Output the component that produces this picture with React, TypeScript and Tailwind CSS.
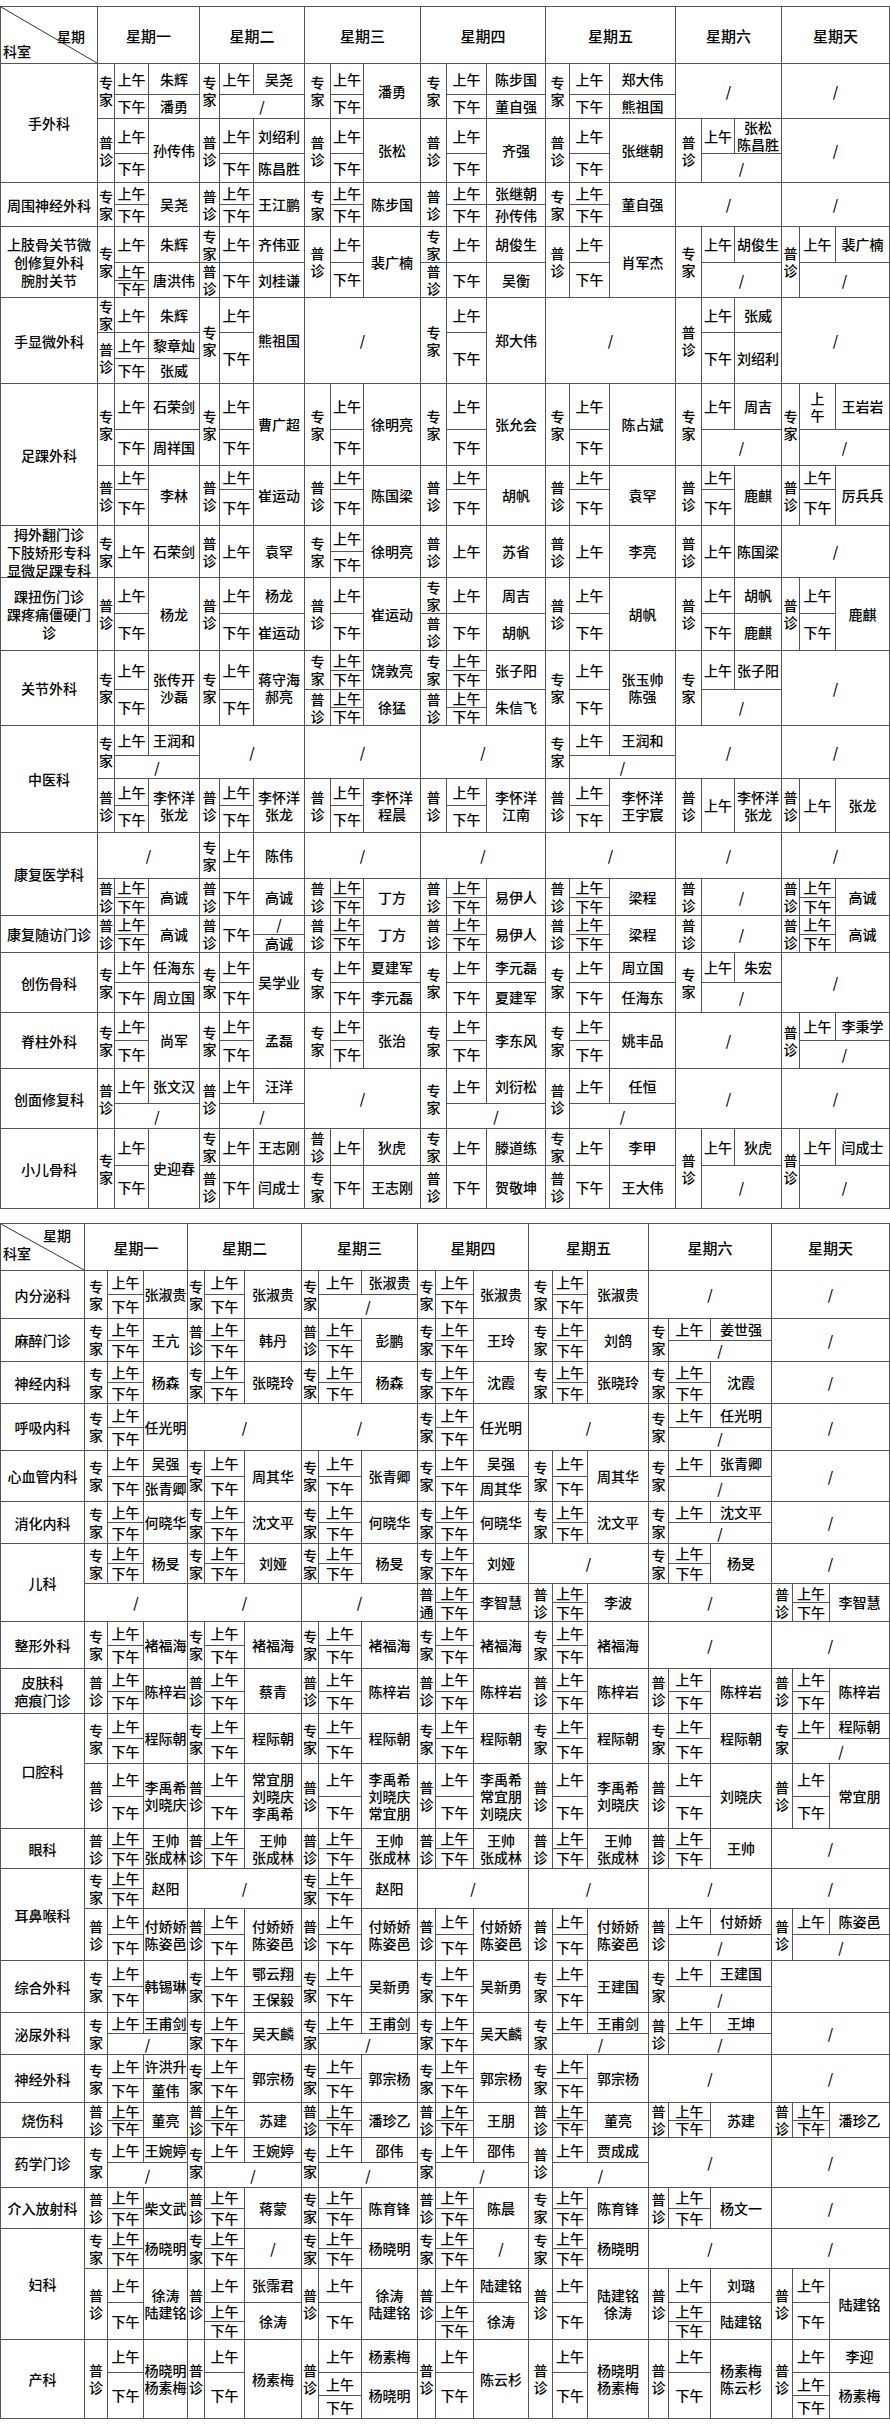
import React from 'react'

type Grp = { s?: boolean; t?: string[]; n?: string[]; h?: string; th?: string }
type Blk = { s?: boolean; e?: boolean; ty?: string; g?: Grp[]; h?: string }
type Col = { w: string; ty: string; tm: string }
type Row = { name: string; h: string; days: (Blk | Blk[])[] }

const Z = '专家'
const P = '普诊'
const AP = '上午 下午'

// whole-day slash / empty
const X = (h?: string): Blk => ({ s: true, h })
const E = (): Blk => ({ e: true })
// groups
const gs = (h?: string): Grp => ({ s: true, h })
const g = (t: string, n: string, h?: string, th?: string): Grp => ({
  t: t.split(' '),
  n: n.split('|'),
  h,
  th,
})
const B = (ty: string, gr: Grp[], h?: string): Blk => ({ ty, g: gr, h })
// 上午/下午 one name
const F = (ty: string, n: string, h?: string, th?: string) => B(ty, [g(AP, n, undefined, th)], h)
// 上午 a / 下午 p
const D = (ty: string, a: string, p: string, h?: string, gh?: string) =>
  B(ty, [g('上午', a, gh), g('下午', p)], h)
// 上午 only, then slash
const A = (ty: string, a: string, h?: string, gh?: string) => B(ty, [g('上午', a, gh), gs()], h)
const M = (ty: string, n: string, h?: string) => B(ty, [g('上午', n)], h)
const N = (ty: string, n: string, h?: string) => B(ty, [g('下午', n)], h)

const C1: Col[] = [
  { w: 'w-[102px]', ty: 'w-[17px]', tm: 'w-[34px]' },
  { w: 'w-[105px]', ty: 'w-[20px]', tm: 'w-[34px]' },
  { w: 'w-[116px]', ty: 'w-[26px]', tm: 'w-[33px]' },
  { w: 'w-[125px]', ty: 'w-[26px]', tm: 'w-[40px]' },
  { w: 'w-[130px]', ty: 'w-[24px]', tm: 'w-[40px]' },
  { w: 'w-[106px]', ty: 'w-[26px]', tm: 'w-[33px]' },
  { w: 'w-[107px]', ty: 'w-[18px]', tm: 'w-[36px]' },
]

const C2: Col[] = [
  { w: 'w-[103px]', ty: 'w-[23px]', tm: 'w-[36px]' },
  { w: 'w-[114px]', ty: 'w-[17px]', tm: 'w-[40px]' },
  { w: 'w-[116px]', ty: 'w-[17px]', tm: 'w-[43px]' },
  { w: 'w-[111px]', ty: 'w-[18px]', tm: 'w-[38px]' },
  { w: 'w-[120px]', ty: 'w-[24px]', tm: 'w-[35px]' },
  { w: 'w-[123px]', ty: 'w-[20px]', tm: 'w-[42px]' },
  { w: 'w-[117px]', ty: 'w-[21px]', tm: 'w-[37px]' },
]

const ROWS1: Row[] = [
  {
    name: '手外科',
    h: 'h-[119px]',
    days: [
      [D(Z, '朱辉', '潘勇', 'h-[55px]', 'h-[31px]'), F(P, '孙传伟', undefined, 'h-[35px]')],
      [A(Z, '吴尧', 'h-[55px]', 'h-[31px]'), D(P, '刘绍利', '陈昌胜', undefined, 'h-[35px]')],
      [F(Z, '潘勇', 'h-[55px]', 'h-[31px]'), F(P, '张松', undefined, 'h-[35px]')],
      [D(Z, '陈步国', '董自强', 'h-[55px]', 'h-[31px]'), F(P, '齐强', undefined, 'h-[35px]')],
      [D(Z, '郑大伟', '熊祖国', 'h-[55px]', 'h-[31px]'), F(P, '张继朝', undefined, 'h-[35px]')],
      [X('h-[55px]'), A(P, '张松\n陈昌胜', undefined, 'h-[35px]')],
      [X('h-[55px]'), X()],
    ],
  },
  {
    name: '周围神经外科',
    h: 'h-[44px]',
    days: [F(Z, '吴尧'), F(P, '王江鹏'), F(Z, '陈步国'), D(P, '张继朝', '孙传伟'), F(Z, '董自强'), X(), X()],
  },
  {
    name: '上肢骨关节微\n创修复外科\n腕肘关节',
    h: 'h-[71px]',
    days: [
      B(Z, [g('上午', '朱辉', 'h-[36px]'), g(AP, '唐洪伟')]),
      [M(Z, '齐伟亚', 'h-[36px]'), N(P, '刘桂谦')],
      F(P, '裴广楠'),
      [M(Z, '胡俊生', 'h-[36px]'), N(P, '吴衡')],
      F(P, '肖军杰'),
      A(Z, '胡俊生', undefined, 'h-[36px]'),
      A(P, '裴广楠', undefined, 'h-[36px]'),
    ],
  },
  {
    name: '手显微外科',
    h: 'h-[86px]',
    days: [
      [M(Z, '朱辉', 'h-[35px]'), D(P, '黎章灿', '张威')],
      F(Z, '熊祖国', undefined, 'h-[35px]'),
      X(),
      F(Z, '郑大伟', undefined, 'h-[35px]'),
      X(),
      D(P, '张威', '刘绍利', undefined, 'h-[35px]'),
      X(),
    ],
  },
  {
    name: '足踝外科',
    h: 'h-[142px]',
    days: [
      [D(Z, '石荣剑', '周祥国', 'h-[82px]', 'h-[46px]'), F(P, '李林', undefined, 'h-[24px]')],
      [F(Z, '曹广超', 'h-[82px]', 'h-[46px]'), F(P, '崔运动', undefined, 'h-[24px]')],
      [F(Z, '徐明亮', 'h-[82px]', 'h-[46px]'), F(P, '陈国梁', undefined, 'h-[24px]')],
      [F(Z, '张允会', 'h-[82px]', 'h-[46px]'), F(P, '胡帆', undefined, 'h-[24px]')],
      [F(Z, '陈占斌', 'h-[82px]', 'h-[46px]'), F(P, '袁罕', undefined, 'h-[24px]')],
      [A(Z, '周吉', 'h-[82px]', 'h-[46px]'), F(P, '鹿麒', undefined, 'h-[24px]')],
      [B(Z, [g('上\n午', '王岩岩', 'h-[46px]'), gs()], 'h-[82px]'), F(P, '厉兵兵', undefined, 'h-[24px]')],
    ],
  },
  {
    name: '拇外翻门诊\n下肢矫形专科\n显微足踝专科',
    h: 'h-[52px]',
    days: [M(Z, '石荣剑'), M(P, '袁罕'), F(Z, '徐明亮'), M(P, '苏省'), M(P, '李亮'), M(P, '陈国梁'), X()],
  },
  {
    name: '踝扭伤门诊\n踝疼痛僵硬门\n诊',
    h: 'h-[73px]',
    days: [
      F(P, '杨龙', undefined, 'h-[36px]'),
      D(P, '杨龙', '崔运动', undefined, 'h-[36px]'),
      F(P, '崔运动', undefined, 'h-[36px]'),
      [M(Z, '周吉', 'h-[36px]'), N(P, '胡帆')],
      F(P, '胡帆', undefined, 'h-[36px]'),
      D(P, '胡帆', '鹿麒', undefined, 'h-[36px]'),
      F(P, '鹿麒', undefined, 'h-[36px]'),
    ],
  },
  {
    name: '关节外科',
    h: 'h-[75px]',
    days: [
      F(Z, '张传开\n沙磊', undefined, 'h-[39px]'),
      F(Z, '蒋守海\n郝亮', undefined, 'h-[39px]'),
      [F(Z, '饶敦亮', 'h-[39px]'), F(P, '徐猛')],
      [F(Z, '张子阳', 'h-[39px]'), F(P, '朱信飞')],
      F(Z, '张玉帅\n陈强', undefined, 'h-[39px]'),
      A(Z, '张子阳', undefined, 'h-[39px]'),
      X(),
    ],
  },
  {
    name: '中医科',
    h: 'h-[107px]',
    days: [
      [A(Z, '王润和', 'h-[53px]', 'h-[30px]'), F(P, '李怀洋\n张龙')],
      [X('h-[53px]'), F(P, '李怀洋\n张龙')],
      [X('h-[53px]'), F(P, '李怀洋\n程晨')],
      [X('h-[53px]'), F(P, '李怀洋\n江南')],
      [A(Z, '王润和', 'h-[53px]', 'h-[30px]'), F(P, '李怀洋\n王宇宸')],
      [X('h-[53px]'), M(P, '李怀洋\n张龙')],
      [X('h-[53px]'), M(P, '张龙')],
    ],
  },
  {
    name: '康复医学科',
    h: 'h-[83px]',
    days: [
      [X('h-[46px]'), F(P, '高诚')],
      [M(Z, '陈伟', 'h-[46px]'), N(P, '高诚')],
      [X('h-[46px]'), F(P, '丁方')],
      [X('h-[46px]'), F(P, '易伊人')],
      [X('h-[46px]'), F(P, '梁程')],
      [X('h-[46px]'), B(P, [gs()])],
      [X('h-[46px]'), F(P, '高诚')],
    ],
  },
  {
    name: '康复随访门诊',
    h: 'h-[37px]',
    days: [
      F(P, '高诚'),
      B(P, [g('下午', '/|高诚')]),
      F(P, '丁方'),
      F(P, '易伊人'),
      F(P, '梁程'),
      B(P, [gs()]),
      F(P, '高诚'),
    ],
  },
  {
    name: '创伤骨科',
    h: 'h-[60px]',
    days: [
      D(Z, '任海东', '周立国'),
      F(Z, '吴学业'),
      D(Z, '夏建军', '李元磊'),
      D(Z, '李元磊', '夏建军'),
      D(Z, '周立国', '任海东'),
      A(Z, '朱宏'),
      X(),
    ],
  },
  {
    name: '脊柱外科',
    h: 'h-[56px]',
    days: [F(Z, '尚军'), F(Z, '孟磊'), F(Z, '张治'), F(Z, '李东风'), F(Z, '姚丰品'), X(), A(P, '李秉学')],
  },
  {
    name: '创面修复科',
    h: 'h-[60px]',
    days: [
      A(P, '张文汉', undefined, 'h-[35px]'),
      A(P, '汪洋', undefined, 'h-[35px]'),
      X(),
      A(Z, '刘衍松', undefined, 'h-[35px]'),
      A(P, '任恒', undefined, 'h-[35px]'),
      X(),
      X(),
    ],
  },
  {
    name: '小儿骨科',
    h: 'h-[79px]',
    days: [
      F(Z, '史迎春', undefined, 'h-[37px]'),
      [M(Z, '王志刚', 'h-[37px]'), N(P, '闫成士')],
      [M(P, '狄虎', 'h-[37px]'), N(Z, '王志刚')],
      [M(Z, '滕道练', 'h-[37px]'), N(P, '贺敬坤')],
      [M(Z, '李甲', 'h-[37px]'), N(P, '王大伟')],
      A(P, '狄虎', undefined, 'h-[37px]'),
      A(P, '闫成士', undefined, 'h-[37px]'),
    ],
  },
]

const ROWS2: Row[] = [
  {
    name: '内分泌科',
    h: 'h-[48px]',
    days: [F(Z, '张淑贵'), F(Z, '张淑贵'), A(Z, '张淑贵'), F(Z, '张淑贵'), F(Z, '张淑贵'), X(), X()],
  },
  {
    name: '麻醉门诊',
    h: 'h-[43px]',
    days: [F(Z, '王亢'), F(P, '韩丹'), F(P, '彭鹏'), F(Z, '王玲'), F(Z, '刘鸽'), A(Z, '姜世强'), X()],
  },
  {
    name: '神经内科',
    h: 'h-[42px]',
    days: [F(Z, '杨森'), F(Z, '张晓玲'), F(Z, '杨森'), F(Z, '沈霞'), F(Z, '张晓玲'), F(Z, '沈霞'), X()],
  },
  {
    name: '呼吸内科',
    h: 'h-[47px]',
    days: [F(Z, '任光明'), X(), X(), F(Z, '任光明'), X(), A(Z, '任光明'), X()],
  },
  {
    name: '心血管内科',
    h: 'h-[51px]',
    days: [
      D(Z, '吴强', '张青卿'),
      F(Z, '周其华'),
      F(Z, '张青卿'),
      D(Z, '吴强', '周其华'),
      F(Z, '周其华'),
      A(Z, '张青卿'),
      X(),
    ],
  },
  {
    name: '消化内科',
    h: 'h-[42px]',
    days: [F(Z, '何晓华'), F(Z, '沈文平'), F(Z, '何晓华'), F(Z, '何晓华'), F(Z, '沈文平'), A(Z, '沈文平'), X()],
  },
  {
    name: '儿科',
    h: 'h-[78px]',
    days: [
      [F(Z, '杨旻', 'h-[40px]'), X()],
      [F(Z, '刘娅', 'h-[40px]'), X()],
      [F(Z, '杨旻', 'h-[40px]'), X()],
      [F(Z, '刘娅', 'h-[40px]'), F('普通', '李智慧')],
      [X('h-[40px]'), F(P, '李波')],
      [F(Z, '杨旻', 'h-[40px]'), X()],
      [X('h-[40px]'), F(P, '李智慧')],
    ],
  },
  {
    name: '整形外科',
    h: 'h-[47px]',
    days: [F(Z, '褚福海'), F(Z, '褚福海'), F(Z, '褚福海'), F(Z, '褚福海'), F(Z, '褚福海'), X(), X()],
  },
  {
    name: '皮肤科\n疤痕门诊',
    h: 'h-[45px]',
    days: [
      F(P, '陈梓岩'),
      F(P, '蔡青'),
      F(P, '陈梓岩'),
      F(P, '陈梓岩'),
      F(P, '陈梓岩'),
      F(P, '陈梓岩'),
      F(P, '陈梓岩'),
    ],
  },
  {
    name: '口腔科',
    h: 'h-[115px]',
    days: [
      [F(Z, '程际朝', 'h-[50px]'), F(P, '李禹希\n刘晓庆')],
      [F(Z, '程际朝', 'h-[50px]'), F(P, '常宜朋\n刘晓庆\n李禹希')],
      [F(Z, '程际朝', 'h-[50px]'), F(P, '李禹希\n刘晓庆\n常宜朋')],
      [F(Z, '程际朝', 'h-[50px]'), F(P, '李禹希\n常宜朋\n刘晓庆')],
      [F(Z, '程际朝', 'h-[50px]'), F(P, '李禹希\n刘晓庆')],
      [F(Z, '程际朝', 'h-[50px]'), F(P, '刘晓庆')],
      [A(Z, '程际朝', 'h-[50px]'), F(P, '常宜朋')],
    ],
  },
  {
    name: '眼科',
    h: 'h-[40px]',
    days: [
      F(P, '王帅\n张成林'),
      F(P, '王帅\n张成林'),
      F(P, '王帅\n张成林'),
      F(P, '王帅\n张成林'),
      F(P, '王帅\n张成林'),
      F(P, '王帅'),
      X(),
    ],
  },
  {
    name: '耳鼻喉科',
    h: 'h-[92px]',
    days: [
      [F(Z, '赵阳', 'h-[40px]'), F(P, '付娇娇\n陈姿邑')],
      [X('h-[40px]'), F(P, '付娇娇\n陈姿邑')],
      [F(Z, '赵阳', 'h-[40px]'), F(P, '付娇娇\n陈姿邑')],
      [X('h-[40px]'), F(P, '付娇娇\n陈姿邑')],
      [X('h-[40px]'), F(P, '付娇娇\n陈姿邑')],
      [X('h-[40px]'), A(P, '付娇娇')],
      [X('h-[40px]'), A(P, '陈姿邑')],
    ],
  },
  {
    name: '综合外科',
    h: 'h-[52px]',
    days: [
      F(Z, '韩锡琳'),
      D(Z, '鄂云翔', '王保毅'),
      F(Z, '吴新勇'),
      F(Z, '吴新勇'),
      F(Z, '王建国'),
      A(Z, '王建国'),
      E(),
    ],
  },
  {
    name: '泌尿外科',
    h: 'h-[42px]',
    days: [A(Z, '王甫剑'), F(Z, '吴天麟'), A(Z, '王甫剑'), F(Z, '吴天麟'), A(Z, '王甫剑'), A(P, '王坤'), X()],
  },
  {
    name: '神经外科',
    h: 'h-[48px]',
    days: [D(Z, '许洪升', '董伟'), F(Z, '郭宗杨'), F(Z, '郭宗杨'), F(Z, '郭宗杨'), F(Z, '郭宗杨'), X(), X()],
  },
  {
    name: '烧伤科',
    h: 'h-[35px]',
    days: [F(P, '董亮'), F(P, '苏建'), F(P, '潘珍乙'), F(P, '王朋'), F(P, '董亮'), F(P, '苏建'), F(P, '潘珍乙')],
  },
  {
    name: '药学门诊',
    h: 'h-[50px]',
    days: [A(Z, '王婉婷'), A(Z, '王婉婷'), A(Z, '邵伟'), A(Z, '邵伟'), A(P, '贾成成'), X(), X()],
  },
  {
    name: '介入放射科',
    h: 'h-[41px]',
    days: [F(P, '柴文武'), F(P, '蒋蒙'), F(Z, '陈育锋'), F(P, '陈晨'), F(Z, '陈育锋'), F(P, '杨文一'), X()],
  },
  {
    name: '妇科',
    h: 'h-[111px]',
    days: [
      [F(Z, '杨晓明', 'h-[40px]'), F(P, '徐涛\n陆建铭', undefined, 'h-[34px]')],
      [F(Z, '/', 'h-[40px]'), B(P, [g('上午', '张霈君', 'h-[34px]'), g(AP, '徐涛')])],
      [F(Z, '杨晓明', 'h-[40px]'), F(P, '徐涛\n陆建铭', undefined, 'h-[34px]')],
      [F(Z, '/', 'h-[40px]'), B(P, [g('上午', '陆建铭', 'h-[34px]'), g(AP, '徐涛')])],
      [F(Z, '杨晓明', 'h-[40px]'), F(P, '陆建铭\n徐涛', undefined, 'h-[34px]')],
      [X('h-[40px]'), B(P, [g('上午', '刘璐', 'h-[34px]'), g(AP, '陆建铭')])],
      [X('h-[40px]'), F(P, '陆建铭', undefined, 'h-[34px]')],
    ],
  },
  {
    name: '产科',
    h: 'h-[78px]',
    days: [
      F(P, '杨晓明\n杨素梅', undefined, 'h-[33px]'),
      F(P, '杨素梅', undefined, 'h-[33px]'),
      B(P, [g('上午', '杨素梅', 'h-[33px]'), g(AP, '杨晓明')]),
      F(P, '陈云杉', undefined, 'h-[33px]'),
      F(P, '杨晓明\n杨素梅', undefined, 'h-[33px]'),
      F(P, '杨素梅\n陈云杉', undefined, 'h-[33px]'),
      B(P, [g('上午', '李迎', 'h-[33px]'), g(AP, '杨素梅')]),
    ],
  },
]

const DAYS = ['星期一', '星期二', '星期三', '星期四', '星期五', '星期六', '星期天']

const cell = 'flex items-center justify-center text-center whitespace-pre-line leading-[17px]'
const size = (h?: string) => (h ? `${h} shrink-0` : 'flex-1 min-h-0')

function GroupView({ gr, c }: { gr: Grp; c: Col }) {
  if (gr.s) return <div className={`${size(gr.h)} ${cell}`}>/</div>
  return (
    <div className={`${size(gr.h)} flex divide-x divide-[#555]`}>
      <div className={`${c.tm} shrink-0 flex flex-col divide-y divide-[#555]`}>
        {gr.t!.map((t, i) => (
          <div key={i} className={`${i === 0 && gr.th ? `${gr.th} shrink-0` : 'flex-1 min-h-0'} ${cell}`}>
            {t}
          </div>
        ))}
      </div>
      <div className="flex-1 min-w-0 flex flex-col divide-y divide-[#555]">
        {gr.n!.map((n, i) => (
          <div key={i} className={`flex-1 min-h-0 ${cell}`}>
            {n}
          </div>
        ))}
      </div>
    </div>
  )
}

function BlockView({ b, c }: { b: Blk; c: Col }) {
  if (b.s) return <div className={`${size(b.h)} ${cell}`}>/</div>
  if (b.e) return <div className={size(b.h)} />
  return (
    <div className={`${size(b.h)} flex divide-x divide-[#555]`}>
      <div className={`${c.ty} shrink-0 ${cell}`}>{b.ty!.split('').join('\n')}</div>
      <div className="flex-1 min-w-0 flex flex-col divide-y divide-[#555]">
        {b.g!.map((gr, i) => (
          <GroupView key={i} gr={gr} c={c} />
        ))}
      </div>
    </div>
  )
}

function Corner({ w, h, wk, ks }: { w: string; h: string; wk: string; ks: string }) {
  return (
    <div className={`${w} ${h} shrink-0 relative`}>
      <svg className="absolute inset-0 h-full w-full" viewBox="0 0 100 100" preserveAspectRatio="none">
        <line x1="0" y1="0" x2="100" y2="100" stroke="#333" strokeWidth="1" vectorEffect="non-scaling-stroke" />
      </svg>
      <span className={`absolute text-[14px] leading-none ${wk}`}>星期</span>
      <span className={`absolute text-[14px] leading-none ${ks}`}>科室</span>
    </div>
  )
}

function Schedule({
  rows,
  cols,
  deptW,
  headH,
  wk,
  ks,
}: {
  rows: Row[]
  cols: Col[]
  deptW: string
  headH: string
  wk: string
  ks: string
}) {
  return (
    <div className="flex flex-col divide-y divide-[#555] border border-[#555]">
      <div className={`flex divide-x divide-[#555] ${headH} shrink-0`}>
        <Corner w={deptW} h="h-full" wk={wk} ks={ks} />
        {DAYS.map((d, i) => (
          <div key={d} className={`${cols[i].w} shrink-0 ${cell} text-[15px]`}>
            {d}
          </div>
        ))}
      </div>
      {rows.map((r) => (
        <div key={r.name} className={`flex divide-x divide-[#555] ${r.h} shrink-0`}>
          <div className={`${deptW} shrink-0 ${cell} leading-[18px]`}>{r.name}</div>
          {r.days.map((d, i) => {
            const blocks = Array.isArray(d) ? d : [d]
            return (
              <div key={i} className={`${cols[i].w} shrink-0 flex flex-col divide-y divide-[#555]`}>
                {blocks.map((b, j) => (
                  <BlockView key={j} b={b} c={cols[i]} />
                ))}
              </div>
            )
          })}
        </div>
      ))}
    </div>
  )
}

export default function App() {
  return (
    <div className="min-h-screen w-[890px] bg-white pt-[6px] text-[14px] font-medium text-black font-['Noto_Sans_CJK_SC','Noto_Sans_CJK_TC',sans-serif]">
      <Schedule
        rows={ROWS1}
        cols={C1}
        deptW="w-[97px]"
        headH="h-[57px]"
        wk="top-[22px] right-[12px]"
        ks="bottom-[5px] left-[2px]"
      />
      <div className="mt-[14px]">
        <Schedule
          rows={ROWS2}
          cols={C2}
          deptW="w-[84px]"
          headH="h-[47px]"
          wk="top-[4px] right-[13px]"
          ks="bottom-[10px] left-[2px]"
        />
      </div>
    </div>
  )
}
